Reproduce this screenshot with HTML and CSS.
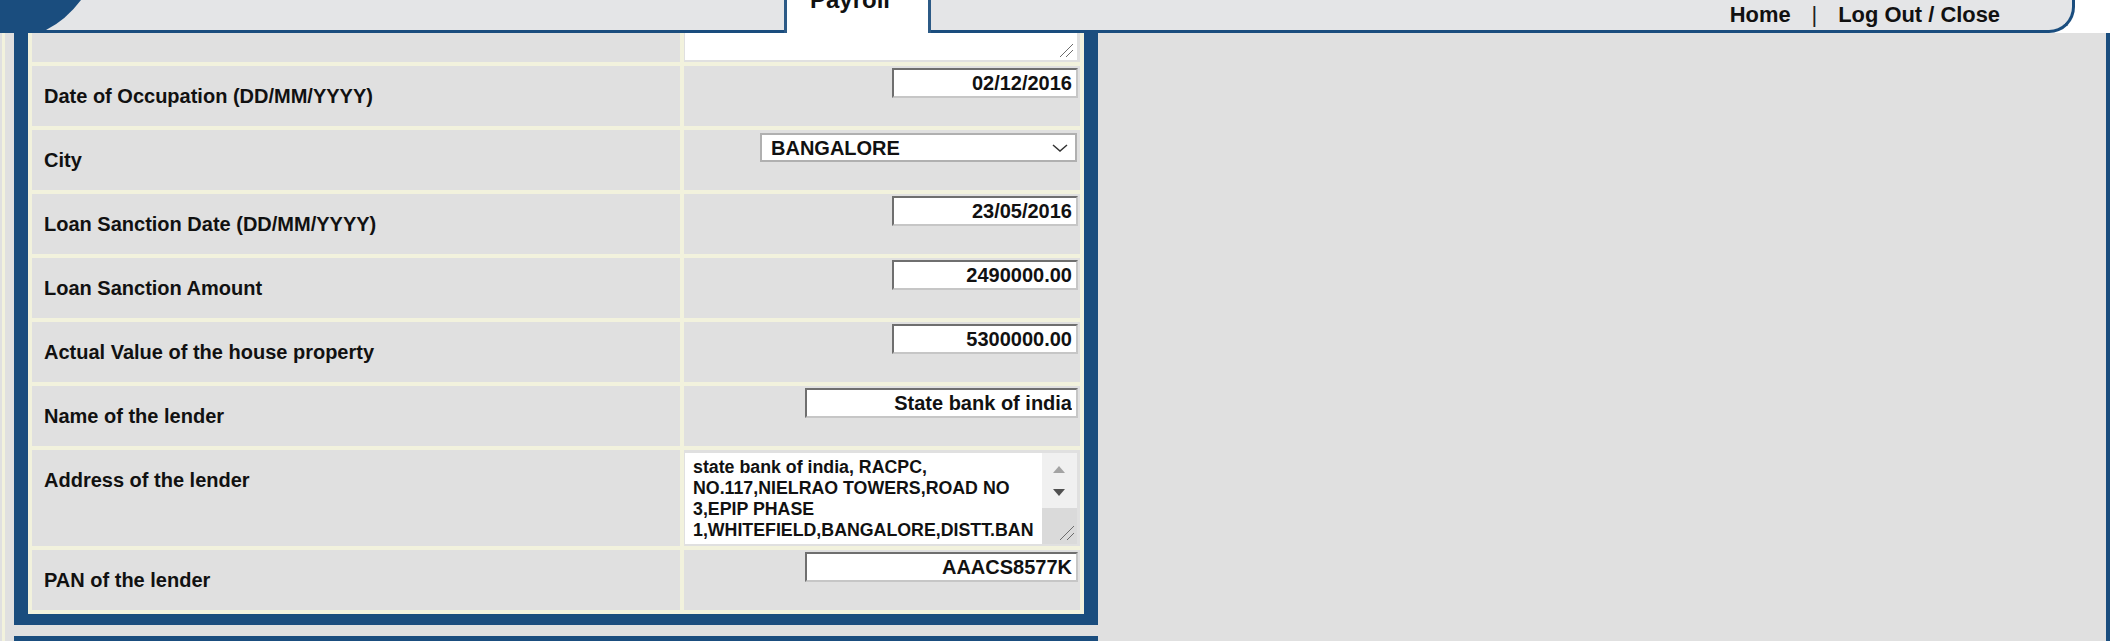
FILE: index.html
```html
<!DOCTYPE html>
<html lang="en">
<head>
<meta charset="utf-8">
<title>Payroll</title>
<link rel="stylesheet" href="styles.css">
</head>
<body>
<header class="topbar">
  <div class="bar-left">
    <svg class="corner" width="82" height="30" viewBox="0 0 82 30" aria-hidden="true"><path d="M0 0H81Q66 20 46 30H0Z" fill="#1a4d7e"/></svg>
  </div>
  <div class="tab"><span class="tab-title">Payroll</span></div>
  <div class="bar-right">
    <nav class="links"><a class="link">Home</a><span class="sep">|</span><a class="link">Log Out / Close</a></nav>
  </div>
</header>
<main class="main">
  <div class="col">
    <section class="panel">
      <div class="form-grid">
        <div class="cell label"></div>
        <div class="cell value cut">
          <div class="ta-cut">
            <svg class="grip" width="16" height="16" viewBox="0 0 16 16" aria-hidden="true"><path d="M15 2L2 15M15 8L8 15" stroke="#6b6b6b" stroke-width="1" fill="none"/></svg>
          </div>
        </div>

        <div class="cell label">Date of Occupation (DD/MM/YYYY)</div>
        <div class="cell value"><input class="field" type="text" value="02/12/2016" readonly></div>

        <div class="cell label">City</div>
        <div class="cell value">
          <div class="select-wrap">
            <select class="select"><option>BANGALORE</option></select>
            <svg class="chev" width="16" height="8" viewBox="0 0 16 8" aria-hidden="true"><path d="M1 1L8 7L15 1" stroke="#333" stroke-width="1.5" fill="none"/></svg>
          </div>
        </div>

        <div class="cell label">Loan Sanction Date (DD/MM/YYYY)</div>
        <div class="cell value"><input class="field" type="text" value="23/05/2016" readonly></div>

        <div class="cell label">Loan Sanction Amount</div>
        <div class="cell value"><input class="field" type="text" value="2490000.00" readonly></div>

        <div class="cell label">Actual Value of the house property</div>
        <div class="cell value"><input class="field" type="text" value="5300000.00" readonly></div>

        <div class="cell label">Name of the lender</div>
        <div class="cell value"><input class="field wide" type="text" value="State bank of india" readonly></div>

        <div class="cell label">Address of the lender</div>
        <div class="cell value addr">
          <div class="ta">
            <div class="ta-text">state bank of india, RACPC,<br>NO.117,NIELRAO TOWERS,ROAD NO<br>3,EPIP PHASE<br>1,WHITEFIELD,BANGALORE,DISTT.BAN</div>
            <div class="sbar">
              <div class="sbar-track">
                <svg class="arrow" width="12" height="7" viewBox="0 0 12 7" aria-hidden="true"><path d="M6 0L12 7H0Z" fill="#a3a3a3"/></svg>
                <svg class="arrow down" width="12" height="7" viewBox="0 0 12 7" aria-hidden="true"><path d="M0 0H12L6 7Z" fill="#505050"/></svg>
              </div>
              <div class="sbar-thumb">
                <svg class="grip2" width="17" height="15" viewBox="0 0 17 15" aria-hidden="true"><path d="M16 1L2 15M16 8L9 15" stroke="#6b6b6b" stroke-width="1" fill="none"/></svg>
              </div>
            </div>
          </div>
        </div>

        <div class="cell label">PAN of the lender</div>
        <div class="cell value"><input class="field wide" type="text" value="AAACS8577K" readonly></div>
      </div>
    </section>
    <div class="panel-next"></div>
  </div>
  <div class="fill"></div>
</main>
</body>
</html>
```
FILE: styles.css
```css
html, body {
  margin: 0;
  padding: 0;
}

body {
  width: 2110px;
  height: 641px;
  overflow: hidden;
  background: #ffffff;
  font-family: "Liberation Sans", Arial, sans-serif;
  color: #111;
}

/* ---------- header ---------- */
.topbar {
  display: flex;
  height: 33px;
}

.bar-left {
  flex: 0 0 784px;
  height: 30px;
  background: #e4e5e7;
  border-bottom: 3px solid #1a4d7e;
  display: flex;
}

.corner {
  display: block;
}

.tab {
  flex: 0 0 147px;
  box-sizing: border-box;
  height: 33px;
  background: #ffffff;
  border-left: 3px solid #2c5a86;
  border-right: 3px solid #2c5a86;
  padding-left: 23px;
  overflow: hidden;
}

.tab-title {
  display: block;
  font-size: 24px;
  line-height: 24px;
  font-weight: bold;
  color: #111;
  margin-top: -12px;
}

.bar-right {
  flex: 0 0 1144px;
  box-sizing: border-box;
  height: 33px;
  background: #e4e5e7;
  border-bottom: 3px solid #1a4d7e;
  border-right: 3px solid #1a4d7e;
  border-bottom-right-radius: 26px;
  display: flex;
  justify-content: flex-end;
  align-items: center;
  padding-right: 72px;
}

.links {
  display: flex;
  align-items: center;
  font-size: 21.9px;
  font-weight: bold;
}

.link {
  color: #111;
  text-decoration: none;
}

.sep {
  font-weight: normal;
  margin: 0 21px;
  color: #222;
}

/* ---------- main ---------- */
.main {
  display: flex;
  height: 608px;
  background: #e0e0e0;
  border-right: 4px solid #1a4d7e;
}

.col {
  flex: 0 0 1098px;
  box-sizing: border-box;
  padding-left: 14px;
  background: linear-gradient(to right, #e0e0e0 0 2px, #f2f2dd 2px 5px, #e0e0e0 5px 14px, transparent 14px);
}

.fill {
  flex: 1;
}

.panel {
  background: #1a4d7e;
  padding: 0 14px 11px 14px;
}

.panel-next {
  height: 30px;
  margin-top: 11px;
  background: #1a4d7e;
}

.form-grid {
  display: grid;
  grid-template-columns: 648px 396px;
  grid-template-rows: 29px repeat(6, 60px) 96px 60px;
  gap: 4px;
  padding: 0 4px 4px 4px;
  background: #f2f2dd;
}

.cell {
  background: #e0e0e0;
  box-sizing: border-box;
}

.label {
  padding: 19px 0 0 12px;
  font-size: 20px;
  line-height: 23px;
  font-weight: bold;
  color: #111;
}

.value {
  display: flex;
  justify-content: flex-end;
  align-items: flex-start;
  padding: 2px;
}

.field {
  width: 186px;
  height: 30px;
  box-sizing: border-box;
  margin: 0;
  border: 2px solid;
  border-color: #6f6f6f #c6c6c6 #c6c6c6 #6f6f6f;
  background: #ffffff;
  font-family: "Liberation Sans", Arial, sans-serif;
  font-size: 20px;
  font-weight: bold;
  color: #111;
  text-align: right;
  padding: 0 4px 0 2px;
  outline: none;
}

.field.wide {
  width: 273px;
}

.select-wrap {
  position: relative;
  width: 317px;
  height: 29px;
  margin: 1px 1px 0 0;
}

.select {
  -webkit-appearance: none;
  appearance: none;
  display: block;
  width: 100%;
  height: 100%;
  box-sizing: border-box;
  margin: 0;
  border: 2px solid #b0b0b0;
  border-radius: 0;
  background: #ffffff;
  font-family: "Liberation Sans", Arial, sans-serif;
  font-size: 20px;
  font-weight: bold;
  color: #111;
  padding: 0 0 0 9px;
  outline: none;
}

.chev {
  position: absolute;
  right: 9px;
  top: 11px;
  pointer-events: none;
}

/* top, partly hidden textarea */
.value.cut {
  padding: 0 3px 2px 1px;
}

.ta-cut {
  width: 392px;
  height: 27px;
  background: #ffffff;
  display: flex;
  justify-content: flex-end;
  align-items: flex-end;
}

.grip {
  display: block;
  margin: 0 3px 2px 0;
}

/* address textarea */
.value.addr {
  padding: 3px 3px 2px 1px;
}

.ta {
  width: 392px;
  height: 91px;
  background: #ffffff;
  display: flex;
}

.ta-text {
  flex: 1;
  padding: 4px 0 0 8px;
  font-size: 17.78px;
  line-height: 21px;
  font-weight: bold;
  color: #111;
  white-space: nowrap;
  overflow: hidden;
}

.sbar {
  flex: 0 0 35px;
  display: flex;
  flex-direction: column;
}

.sbar-track {
  height: 55px;
  box-sizing: border-box;
  background: #f0f0f0;
  display: flex;
  flex-direction: column;
  padding: 13px 0 0 11px;
}

.arrow {
  display: block;
}

.arrow.down {
  margin-top: 16px;
}

.sbar-thumb {
  flex: 1;
  background: #dadada;
  display: flex;
  justify-content: flex-end;
  align-items: flex-end;
}

.grip2 {
  display: block;
  margin: 0 2px 4px 0;
}
```
